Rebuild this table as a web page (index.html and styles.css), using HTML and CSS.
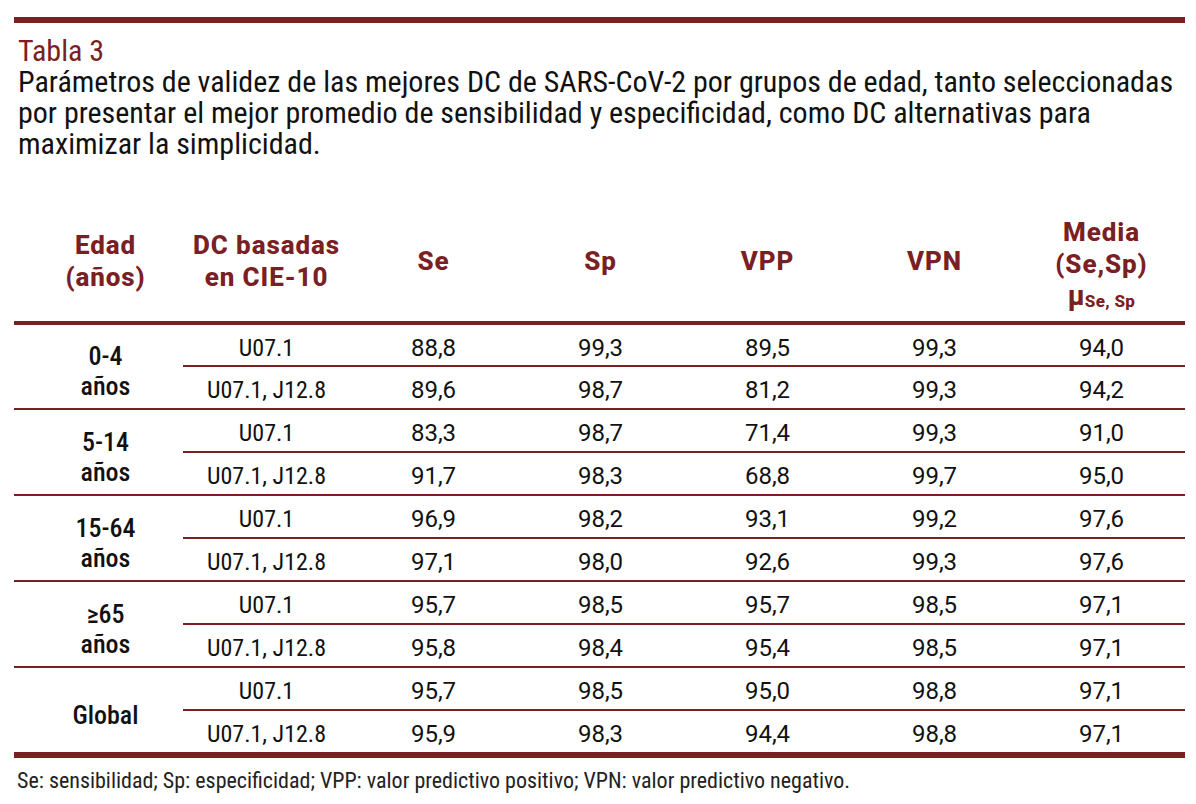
FILE: index.html
```html
<!DOCTYPE html>
<html lang="es">
<head>
<meta charset="utf-8">
<title>Tabla 3</title>
<link rel="stylesheet" href="styles.css">
</head>
<body>
<div class="page">
  <div class="topbar"></div>
  <div class="caption">
    <div class="label">Tabla 3</div>
    <div class="text">Parámetros de validez de las mejores DC de SARS-CoV-2 por grupos de edad, tanto seleccionadas<br>por presentar el mejor promedio de sensibilidad y especificidad, como DC alternativas para<br>maximizar la simplicidad.</div>
  </div>
  <table class="data">
    <colgroup>
      <col class="c-age"><col class="c-dc"><col class="c-num"><col class="c-num"><col class="c-num"><col class="c-num"><col class="c-num">
    </colgroup>
    <thead>
      <tr>
        <th class="age-h">Edad<br>(años)</th>
        <th>DC basadas<br>en CIE-10</th>
        <th>Se</th>
        <th>Sp</th>
        <th>VPP</th>
        <th>VPN</th>
        <th class="media-h">Media<br>(Se,Sp)<br><span class="mu">µ<sub>Se, Sp</sub></span></th>
      </tr>
    </thead>
    <tbody>
      <tr class="first"><td class="age" rowspan="2">0-4<br>años</td><td class="dc">U07.1</td><td>88,8</td><td>99,3</td><td>89,5</td><td>99,3</td><td>94,0</td></tr>
      <tr class="second"><td class="dc">U07.1, J12.8</td><td>89,6</td><td>98,7</td><td>81,2</td><td>99,3</td><td>94,2</td></tr>
      <tr class="first"><td class="age" rowspan="2">5-14<br>años</td><td class="dc">U07.1</td><td>83,3</td><td>98,7</td><td>71,4</td><td>99,3</td><td>91,0</td></tr>
      <tr class="second"><td class="dc">U07.1, J12.8</td><td>91,7</td><td>98,3</td><td>68,8</td><td>99,7</td><td>95,0</td></tr>
      <tr class="first"><td class="age" rowspan="2">15-64<br>años</td><td class="dc">U07.1</td><td>96,9</td><td>98,2</td><td>93,1</td><td>99,2</td><td>97,6</td></tr>
      <tr class="second"><td class="dc">U07.1, J12.8</td><td>97,1</td><td>98,0</td><td>92,6</td><td>99,3</td><td>97,6</td></tr>
      <tr class="first"><td class="age" rowspan="2">≥65<br>años</td><td class="dc">U07.1</td><td>95,7</td><td>98,5</td><td>95,7</td><td>98,5</td><td>97,1</td></tr>
      <tr class="second"><td class="dc">U07.1, J12.8</td><td>95,8</td><td>98,4</td><td>95,4</td><td>98,5</td><td>97,1</td></tr>
      <tr class="first"><td class="age" rowspan="2">Global</td><td class="dc">U07.1</td><td>95,7</td><td>98,5</td><td>95,0</td><td>98,8</td><td>97,1</td></tr>
      <tr class="second last"><td class="dc">U07.1, J12.8</td><td>95,9</td><td>98,3</td><td>94,4</td><td>98,8</td><td>97,1</td></tr>
    </tbody>
  </table>
  <p class="note">Se: sensibilidad; Sp: especificidad; VPP: valor predictivo positivo; VPN: valor predictivo negativo.</p>
</div>
</body>
</html>
```

FILE: styles.css
```css
* { box-sizing: border-box; }
html, body { margin: 0; padding: 0; background: #fff; }
body {
  font-family: "Roboto", "DejaVu Sans Condensed", sans-serif;
  color: #111;
}
.page {
  width: 1196px;
  padding: 17px 11px 0 14px;
}
.topbar {
  height: 6px;
  background: #7a2022;
}
.caption {
  padding: 12px 0 0 4px;
  font-size: 30px;
  line-height: 31px;
  font-stretch: 79%;
  white-space: nowrap;
}
.caption .label { color: #7a2022; }
.caption .text { color: #111; }
.data {
  margin-top: 38px;
  width: 1171px;
  border-collapse: collapse;
  table-layout: fixed;
}
.c-age { width: 169px; }
.c-dc { width: 167px; }
.c-num { width: 167px; }
.data th {
  color: #7a2022;
  font-weight: 800;
  font-size: 26px;
  line-height: 32px;
  font-stretch: 100%;
  letter-spacing: 0.9px;
  height: 126px;
  padding: 3px 0 0;
  text-align: center;
  vertical-align: middle;
  border-bottom: 4px solid #7a2022;
}
.data th.age-h { padding-left: 14px; }
.data th.media-h { padding-top: 14px; }
.mu { display: inline-block; line-height: 30px; font-size: 27px; letter-spacing: 0; }
.mu sub { font-size: 17px; vertical-align: -2px; letter-spacing: 0.3px; }
.data td {
  font-size: 24px;
  line-height: 28px;
  font-stretch: 88%;
  height: 43px;
  padding: 5px 0 0;
  text-align: center;
  vertical-align: middle;
  border-bottom: 2px solid #7a2022;
  color: #111;
}
.data td.dc { font-stretch: 79%; }
.data td.age {
  font-size: 26px;
  font-weight: 500;
  line-height: 30px;
  font-stretch: 80%;
  padding: 9px 0 0 14px;
}
.data tr.last td { border-bottom: 6px solid #7a2022; height: 45px; }
.data tr.first:nth-last-child(2) td.age { border-bottom: 6px solid #7a2022; }
.note {
  margin: 11px 0 0 3px;
  font-size: 22px;
  line-height: 24px;
  font-stretch: 85%;
  color: #222;
}
```
